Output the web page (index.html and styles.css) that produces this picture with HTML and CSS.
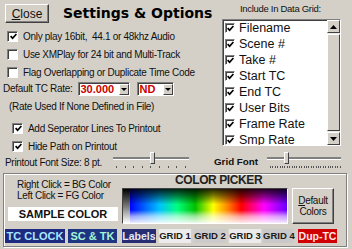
FILE: index.html
```html
<!DOCTYPE html>
<html lang="en">
<head>
	<meta charset="UTF-8">
	<title>Settings &amp; Options</title>
	<link rel="stylesheet" href="styles.css">
</head>
<body>
	<div class="window">
		<div class="top">
			<div class="left">
				<div class="header">
					<button class="close"><u>C</u>lose</button>
					<h1>Settings &amp; Options</h1>
				</div>
				<div class="check"><span class="cb"><svg width="7" height="7" viewBox="0 0 7 7"><path d="M0.6 3.2 L2.6 5.2 L6.4 1" fill="none" stroke="#000" stroke-width="1.7"/></svg></span>Only play 16bit,&nbsp; 44.1 or 48khz Audio</div>
				<div class="check"><span class="cb"></span>Use XMPlay for 24 bit and Multi-Track</div>
				<div class="check"><span class="cb"></span>Flag Overlapping or Duplicate Time Code</div>
				<div class="rate">
					<span>Default TC Rate:</span>
					<div class="select rate_val"><span class="val">30.000</span><span class="arrow"></span></div>
					<div class="select nd_val"><span class="val">ND</span><span class="arrow"></span></div>
				</div>
				<div class="note">(Rate Used If None Defined in File)</div>
				<div class="check indent"><span class="cb"><svg width="7" height="7" viewBox="0 0 7 7"><path d="M0.6 3.2 L2.6 5.2 L6.4 1" fill="none" stroke="#000" stroke-width="1.7"/></svg></span>Add Seperator Lines To Printout</div>
				<div class="check indent"><span class="cb"><svg width="7" height="7" viewBox="0 0 7 7"><path d="M0.6 3.2 L2.6 5.2 L6.4 1" fill="none" stroke="#000" stroke-width="1.7"/></svg></span>Hide Path on Printout</div>
			</div>
			<div class="right">
				<div class="caption">Include In Data Grid:</div>
				<div class="listbox">
					<ul>
						<li><span class="cb small"><svg width="7" height="7" viewBox="0 0 7 7"><path d="M0.6 3.2 L2.6 5.2 L6.4 1" fill="none" stroke="#000" stroke-width="1.7"/></svg></span>Filename</li>
						<li><span class="cb small"><svg width="7" height="7" viewBox="0 0 7 7"><path d="M0.6 3.2 L2.6 5.2 L6.4 1" fill="none" stroke="#000" stroke-width="1.7"/></svg></span>Scene #</li>
						<li><span class="cb small"><svg width="7" height="7" viewBox="0 0 7 7"><path d="M0.6 3.2 L2.6 5.2 L6.4 1" fill="none" stroke="#000" stroke-width="1.7"/></svg></span>Take #</li>
						<li><span class="cb small"><svg width="7" height="7" viewBox="0 0 7 7"><path d="M0.6 3.2 L2.6 5.2 L6.4 1" fill="none" stroke="#000" stroke-width="1.7"/></svg></span>Start TC</li>
						<li><span class="cb small"><svg width="7" height="7" viewBox="0 0 7 7"><path d="M0.6 3.2 L2.6 5.2 L6.4 1" fill="none" stroke="#000" stroke-width="1.7"/></svg></span>End TC</li>
						<li><span class="cb small"><svg width="7" height="7" viewBox="0 0 7 7"><path d="M0.6 3.2 L2.6 5.2 L6.4 1" fill="none" stroke="#000" stroke-width="1.7"/></svg></span>User Bits</li>
						<li><span class="cb small"><svg width="7" height="7" viewBox="0 0 7 7"><path d="M0.6 3.2 L2.6 5.2 L6.4 1" fill="none" stroke="#000" stroke-width="1.7"/></svg></span>Frame Rate</li>
						<li><span class="cb small"><svg width="7" height="7" viewBox="0 0 7 7"><path d="M0.6 3.2 L2.6 5.2 L6.4 1" fill="none" stroke="#000" stroke-width="1.7"/></svg></span>Smp Rate</li>
					</ul>
					<div class="scroll">
						<span class="sbtn"><svg width="7" height="4" viewBox="0 0 7 4"><path d="M0 4 L3.5 0 L7 4 Z" fill="#000"/></svg></span>
						<span class="sthumb"></span>
						<span class="sbtn"><svg width="7" height="4" viewBox="0 0 7 4"><path d="M0 0 L3.5 4 L7 0 Z" fill="#000"/></svg></span>
					</div>
				</div>
			</div>
		</div>
		<div class="fonts">
			<span class="font_label">Printout Font Size: 8 pt.</span>
			<div class="slider print_slider"><span class="track"></span><span class="thumb"></span><span class="ticks"></span></div>
			<span class="grid_font">Grid Font</span>
			<div class="slider grid_slider"><span class="track"></span><span class="thumb"></span><span class="ticks"></span></div>
		</div>
		<div class="picker">
			<div class="picker_left">
				<div class="hint">Right Click = BG Color</div>
				<div class="hint">Left Click = FG Color</div>
				<div class="sample">SAMPLE COLOR</div>
			</div>
			<div class="picker_title">COLOR PICKER</div>
			<div class="spectrum"></div>
			<button class="default_btn"><u>D</u>efault<br>Colors</button>
			<div class="swatches">
				<span class="sw tc">TC CLOCK</span>
				<span class="sw sc">SC &amp; TK</span>
				<span class="sw lab">Labels</span>
				<span class="sw g1">GRID 1</span>
				<span class="sw g2">GRID 2</span>
				<span class="sw g3">GRID 3</span>
				<span class="sw g4">GRID 4</span>
				<span class="sw dup">Dup-TC</span>
			</div>
		</div>
	</div>
</body>
</html>
```
FILE: styles.css
```css
body{
	margin:0;
	background-color:#d4d0c8;
	font-family:"Liberation Sans",Arial,sans-serif;
	font-size:10px;
	letter-spacing:-0.3px;
	color:#111;
}
.window{
	width:352px;
	height:249px;
	overflow:hidden;
}
.top{
	display:flex;
	height:153px;
}
.left{
	width:222px;
}
.right{
	width:119px;
}
.header{
	display:flex;
	align-items:flex-start;
	height:27px;
}
.close{
	margin:4px 0 0 5px;
	width:44px;
	height:19px;
	padding:0;
	background:#d4d0c8;
	border:1px solid;
	border-color:#fff #404040 #404040 #fff;
	box-shadow:inset -1px -1px #808080;
	font:12px "Liberation Sans",Arial,sans-serif;
	color:#111;
}
h1{
	margin:5px 0 0 14px;
	font:bold 14px "DejaVu Sans",Verdana,sans-serif;
	letter-spacing:0;
	color:#000;
	white-space:nowrap;
}
.check{
	display:flex;
	align-items:center;
	height:18px;
	padding-left:7px;
	white-space:nowrap;
}
.check.indent{
	padding-left:12px;
}
.cb{
	flex:none;
	width:11px;
	height:11px;
	box-sizing:border-box;
	background:#fff;
	border:1px solid;
	border-color:#808080 #fff #fff #808080;
	box-shadow:inset 1px 1px #404040;
	margin-right:5px;
	display:flex;
	align-items:center;
	justify-content:center;
	padding:1px 0 0 1px;
}
.cb.small{
	width:10px;
	height:10px;
	margin:0 4px 0 2px;
}
.rate{
	display:flex;
	align-items:center;
	height:15px;
	padding-left:3px;
	white-space:nowrap;
}
.select{
	display:flex;
	height:14px;
	box-sizing:border-box;
	background:#fff;
	border:1px solid;
	border-color:#808080 #fff #fff #808080;
	box-shadow:inset 1px 1px #404040;
}
.rate_val{
	width:52px;
	margin-left:5px;
}
.nd_val{
	width:37px;
	margin-left:7px;
}
.select .val{
	flex:1;
	padding-left:2px;
	color:#cc0000;
	font:bold 11px/12px "Liberation Sans",Arial,sans-serif;
	letter-spacing:0;
}
.select .arrow{
	width:10px;
	margin:1px 0 0;
	box-sizing:border-box;
	background:#d4d0c8;
	border:1px solid;
	border-color:#fff #404040 #404040 #fff;
	display:flex;
	align-items:center;
	justify-content:center;
}
.select .arrow::after{
	content:"";
	border-left:3px solid transparent;
	border-right:3px solid transparent;
	border-top:3px solid #000;
}
.note{
	height:14px;
	line-height:14px;
	margin:4px 0 5px 9px;
	white-space:nowrap;
}
.caption{
	height:19px;
	line-height:17px;
	padding-left:18px;
	font-size:9.5px;
	white-space:nowrap;
}
.listbox{
	display:flex;
	height:127px;
	box-sizing:border-box;
	background:#fff;
	border:1px solid;
	border-color:#808080 #fff #fff #808080;
	box-shadow:inset 1px 1px #404040;
	overflow:hidden;
}
.listbox ul{
	flex:1;
	margin:0;
	padding:0;
	list-style:none;
}
.listbox li{
	display:flex;
	align-items:center;
	height:16px;
	font:12.5px "Liberation Sans",Arial,sans-serif;
	letter-spacing:0;
	color:#111;
	white-space:nowrap;
}
.scroll{
	width:13px;
	display:flex;
	flex-direction:column;
	background:#ebe9e4;
}
.sbtn,.sthumb{
	box-sizing:border-box;
	background:#d4d0c8;
	border:1px solid;
	border-color:#fff #404040 #404040 #fff;
	display:flex;
	align-items:center;
	justify-content:center;
}
.sbtn{
	height:13px;
}
.sthumb{
	flex:1;
	margin:1px 0;
}
.fonts{
	display:flex;
	height:20px;
	white-space:nowrap;
}
.font_label{
	margin-left:5px;
	width:108px;
	line-height:18px;
	padding-top:1px;
}
.slider{
	position:relative;
	height:18px;
}
.print_slider{
	width:76px;
}
.grid_slider{
	width:74px;
	margin-left:7px;
}
.grid_font{
	margin-left:25px;
	width:46px;
	font:bold 9.8px/18px "Liberation Sans",Arial,sans-serif;
	letter-spacing:0;
}
.track{
	position:absolute;
	left:0;
	right:0;
	top:4px;
	height:2px;
	background:#808080;
	border-bottom:1px solid #fff;
}
.thumb{
	position:absolute;
	top:-1px;
	width:5px;
	height:12px;
	background:#d4d0c8;
	border:1px solid;
	border-color:#fff #404040 #404040 #fff;
	box-sizing:border-box;
}
.print_slider .thumb{
	left:37px;
}
.grid_slider .thumb{
	left:17px;
}
.ticks{
	position:absolute;
	left:3px;
	right:0;
	top:13px;
	height:2px;
}
.print_slider .ticks{
	background:repeating-linear-gradient(to right,#555 0 1px,transparent 1px 8.6px);
}
.grid_slider .ticks{
	background:repeating-linear-gradient(to right,#555 0 1px,transparent 1px 2.4px);
}
.picker{
	margin:0 5px 0 3px;
	height:74px;
	box-sizing:border-box;
	border:1px solid #808080;
	box-shadow:1px 1px #fff,inset 1px 1px #fff;
	display:grid;
	grid-template-columns:114px 166px 42px;
	grid-template-rows:14px 36px auto;
	column-gap:4px;
}
.picker_left{
	grid-row:1 / 3;
	grid-column:1;
	padding-top:5px;
}
.hint{
	padding-left:13px;
	line-height:11px;
	white-space:nowrap;
}
.sample{
	margin:6px 0 0 4px;
	height:14px;
	background:#fff;
	text-align:center;
	font:bold 11px/14px "Liberation Sans",Arial,sans-serif;
	letter-spacing:0;
	color:#111;
}
.picker_title{
	grid-row:1;
	grid-column:2 / 4;
	padding-left:53px;
	font-weight:bold;
	font-size:12px;
	letter-spacing:-0.4px;
	line-height:13px;
	color:#222;
	white-space:nowrap;
}
.spectrum{
	grid-row:2;
	grid-column:2;
	box-sizing:border-box;
	border:1px solid;
	border-color:#404040 #fff #fff #404040;
	background:
		linear-gradient(to bottom,#000,#777 50%,#fff) 0 0 / 7px 100% no-repeat,
		linear-gradient(to bottom,rgba(0,0,0,.85) 0%,rgba(0,0,0,.5) 20%,rgba(0,0,0,0) 45%,rgba(255,255,255,0) 62%,rgba(255,255,255,.6) 80%,rgba(255,255,255,.92) 100%),
		linear-gradient(to right,#0000ff 4%,#00c0ff 22%,#00ff80 33%,#00c000 44%,#ffff00 55%,#ff8000 64%,#ff0000 72%,#ff00ff 86%,#6a00ff 100%);
}
.default_btn{
	grid-row:2;
	grid-column:3;
	padding:0;
	background:#d4d0c8;
	border:1px solid;
	border-color:#fff #404040 #404040 #fff;
	box-shadow:inset -1px -1px #808080;
	font-family:"Liberation Sans",Arial,sans-serif;
	font-size:10px;
	letter-spacing:-0.3px;
	line-height:11px;
	color:#111;
}
.swatches{
	grid-row:3;
	grid-column:1 / -1;
	display:flex;
	margin:5px 0 0 1px;
	height:14px;
}
.sw{
	flex:none;
	height:14px;
	text-align:center;
	font:bold 9.5px/14px "Liberation Sans",Arial,sans-serif;
	letter-spacing:0;
	color:#1a1a1a;
	white-space:nowrap;
}
.tc{
	width:60px;
	background:#1e2a80;
	color:#a9e6ff;
	font-size:11px;
}
.sc{
	width:49px;
	margin-left:3px;
	background:#1d3582;
	color:#a6f3d6;
	font-size:11px;
}
.lab{
	width:34px;
	margin-left:5px;
	background:#262d72;
	color:#e8e8f2;
	font-size:10.5px;
}
.g1{
	width:32px;
	margin-left:3px;
	background:#ececec;
}
.g2{
	width:32px;
	margin-left:3px;
	background:#cbcbcb;
}
.g3{
	width:32px;
	margin-left:3px;
	background:#ebebeb;
}
.g4{
	width:30px;
	margin-left:2px;
	background:#c9c9c9;
}
.dup{
	width:39px;
	margin-left:5px;
	background:#d00000;
	color:#ffe6e6;
	font-size:10.5px;
}
```
